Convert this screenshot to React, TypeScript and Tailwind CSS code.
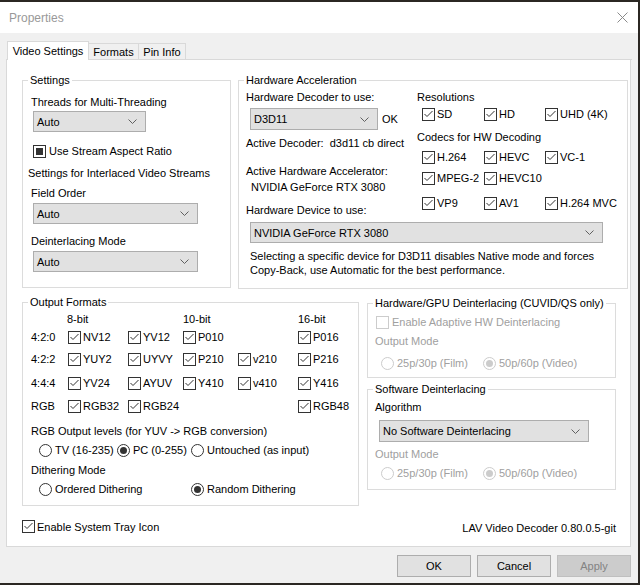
import clsx from "clsx";

type BoxState = "checked" | "mixed" | "off";

const Box = ({ state = "checked", disabled = false }: { state?: BoxState; disabled?: boolean }) => (
  <span
    className={clsx(
      "flex h-[13px] w-[13px] shrink-0 items-center justify-center border bg-white",
      disabled ? "border-[#cccccc]" : "border-[#333333]"
    )}
  >
    {state === "checked" && (
      <svg width="11" height="11" viewBox="0 0 11 11">
        <path d="M1.5 5 L4 7.5 L9.5 2" fill="none" stroke="#333333" strokeWidth="1" />
      </svg>
    )}
    {state === "mixed" && <span className="h-[7px] w-[7px] bg-[#333333]" />}
  </span>
);

const Radio = ({ on = false, disabled = false }: { on?: boolean; disabled?: boolean }) => (
  <span
    className={clsx(
      "flex h-[13px] w-[13px] shrink-0 items-center justify-center rounded-full border bg-white",
      disabled ? "border-[#cccccc]" : "border-[#333333]"
    )}
  >
    {on && <span className={clsx("h-[7px] w-[7px] rounded-full", disabled ? "bg-[#cccccc]" : "bg-[#333333]")} />}
  </span>
);

const Check = ({
  label,
  state = "checked",
  disabled = false,
  className,
}: {
  label: string;
  state?: BoxState;
  disabled?: boolean;
  className?: string;
}) => (
  <div className={clsx("flex h-[14px] items-center gap-[2px]", disabled && "text-[#a0a0a0]", className)}>
    <Box state={state} disabled={disabled} />
    <span className="whitespace-nowrap">{label}</span>
  </div>
);

const Option = ({
  label,
  on = false,
  disabled = false,
  className,
}: {
  label: string;
  on?: boolean;
  disabled?: boolean;
  className?: string;
}) => (
  <div className={clsx("flex h-[14px] items-center gap-[3px]", disabled && "text-[#a0a0a0]", className)}>
    <Radio on={on} disabled={disabled} />
    <span className="whitespace-nowrap">{label}</span>
  </div>
);

const Chevron = () => (
  <svg width="9" height="5" viewBox="0 0 9 5">
    <path d="M0.5 0.5 L4.5 4.5 L8.5 0.5" fill="none" stroke="#606060" strokeWidth="1" />
  </svg>
);

const Combo = ({ value, className }: { value: string; className: string }) => (
  <div
    className={clsx(
      "flex h-[21px] shrink-0 items-center justify-between border border-[#adadad] bg-[#e1e1e1] pl-[3px] pr-[8px]",
      className
    )}
  >
    <span className="whitespace-nowrap">{value}</span>
    <Chevron />
  </div>
);

const Legend = ({ children }: { children: string }) => (
  <legend className="ml-[5px] px-[2px] leading-[15px] whitespace-nowrap">{children}</legend>
);

const SettingsGroup = () => (
  <fieldset className="h-[215px] w-[209px] shrink-0 border border-[#dcdcdc]">
    <Legend>Settings</Legend>
    <div className="flex flex-col pl-[8px]">
      <div className="mt-[7px]">Threads for Multi-Threading</div>
      <Combo value="Auto" className="mt-[2px] ml-[2px] w-[113px]" />
      <Check label="Use Stream Aspect Ratio" state="mixed" className="mt-[12px] ml-[2px] gap-[3px]" />
      <div className="mt-[8px] -ml-[3px]">Settings for Interlaced Video Streams</div>
      <div className="mt-[6px]">Field Order</div>
      <Combo value="Auto" className="mt-[3px] ml-[2px] w-[165px]" />
      <div className="mt-[10px]">Deinterlacing Mode</div>
      <Combo value="Auto" className="mt-[3px] ml-[2px] w-[165px]" />
    </div>
  </fieldset>
);

const HardwareGroup = () => (
  <fieldset className="h-[216px] w-[390px] shrink-0 border border-[#dcdcdc]">
    <Legend>Hardware Acceleration</Legend>
    <div className="flex">
      <div className="flex w-[178px] shrink-0 flex-col pl-[7px]">
        <div className="mt-[2px]">Hardware Decoder to use:</div>
        <div className="mt-[4px] ml-[4px] flex items-center gap-[4px]">
          <Combo value="D3D11" className="h-[22px] w-[128px]" />
          <span>OK</span>
        </div>
        <div className="mt-[6px] whitespace-nowrap">Active Decoder:&nbsp;&nbsp;d3d11 cb direct</div>
        <div className="mt-[14px] whitespace-nowrap">Active Hardware Accelerator:</div>
        <div className="mt-[2px] ml-[5px] whitespace-nowrap">NVIDIA GeForce RTX 3080</div>
        <div className="mt-[9px] whitespace-nowrap">Hardware Device to use:</div>
      </div>
      <div className="flex flex-col">
        <div className="mt-[2px]">Resolutions</div>
        <div className="mt-[3px] flex pl-[5px]">
          <Check label="SD" className="w-[62px]" />
          <Check label="HD" className="w-[61px]" />
          <Check label="UHD (4K)" />
        </div>
        <div className="mt-[9px]">Codecs for HW Decoding</div>
        <div className="mt-[6px] flex pl-[5px]">
          <Check label="H.264" className="w-[62px]" />
          <Check label="HEVC" className="w-[61px]" />
          <Check label="VC-1" />
        </div>
        <div className="mt-[7px] flex pl-[5px]">
          <Check label="MPEG-2" className="w-[62px]" />
          <Check label="HEVC10" className="w-[61px]" />
        </div>
        <div className="mt-[11px] flex pl-[5px]">
          <Check label="VP9" className="w-[62px]" />
          <Check label="AV1" className="w-[61px]" />
          <Check label="H.264 MVC" />
        </div>
      </div>
    </div>
    <div className="flex flex-col pl-[11px]">
      <Combo value="NVIDIA GeForce RTX 3080" className="mt-[5px] w-[353px]" />
      <p className="mt-[6px] whitespace-nowrap">
        Selecting a specific device for D3D11 disables Native mode and forces
        <br />
        Copy-Back, use Automatic for the best performance.
      </p>
    </div>
  </fieldset>
);

const formatRows: { label: string; cells: (string | null)[] }[] = [
  { label: "4:2:0", cells: ["NV12", "YV12", "P010", null, "P016"] },
  { label: "4:2:2", cells: ["YUY2", "UYVY", "P210", "v210", "P216"] },
  { label: "4:4:4", cells: ["YV24", "AYUV", "Y410", "v410", "Y416"] },
  { label: "RGB", cells: ["RGB32", "RGB24", null, null, "RGB48"] },
];

const OutputGroup = () => (
  <fieldset className="h-[211px] w-[337px] shrink-0 border border-[#dcdcdc]">
    <Legend>Output Formats</Legend>
    <div className="flex flex-col pl-[8px]">
      <div className="mt-[2px] grid grid-cols-[37px_60px_55px_55px_60px_1fr] grid-rows-[14px_22px_22px_26px_20px] items-center">
        <span />
        <span className="-ml-[1px]">8-bit</span>
        <span />
        <span>10-bit</span>
        <span />
        <span>16-bit</span>
        {formatRows.map((row) => (
          <div key={row.label} className="contents">
            <span>{row.label}</span>
            {row.cells.map((c, i) => (c ? <Check key={i} label={c} /> : <span key={i} />))}
          </div>
        ))}
      </div>
      <div className="mt-[8px] whitespace-nowrap">RGB Output levels (for YUV -&gt; RGB conversion)</div>
      <div className="mt-[5px] flex pl-[8px]">
        <Option label="TV (16-235)" className="w-[78px]" />
        <Option label="PC (0-255)" on className="w-[74px]" />
        <Option label="Untouched (as input)" />
      </div>
      <div className="mt-[6px]">Dithering Mode</div>
      <div className="mt-[5px] flex pl-[8px]">
        <Option label="Ordered Dithering" className="w-[152px]" />
        <Option label="Random Dithering" on />
      </div>
    </div>
  </fieldset>
);

const DeinterlaceGroups = () => (
  <div className="ml-[8px] flex w-[249px] shrink-0 flex-col">
    <fieldset className="mt-[1px] h-[82px] border border-[#dcdcdc]">
      <Legend>Hardware/GPU Deinterlacing (CUVID/QS only)</Legend>
      <div className="flex flex-col pl-[7px]">
        <Check label="Enable Adaptive HW Deinterlacing" state="off" disabled className="mt-[4px] ml-[1px] gap-[3px]" />
        <div className="mt-[5px] text-[#a0a0a0]">Output Mode</div>
        <div className="mt-[8px] flex pl-[6px]">
          <Option label="25p/30p (Film)" disabled className="w-[102px]" />
          <Option label="50p/60p (Video)" on disabled />
        </div>
      </div>
    </fieldset>
    <fieldset className="mt-[4px] h-[108px] border border-[#dcdcdc]">
      <Legend>Software Deinterlacing</Legend>
      <div className="flex flex-col pl-[7px]">
        <div className="mt-[3px]">Algorithm</div>
        <Combo value="No Software Deinterlacing" className="mt-[6px] ml-[4px] h-[22px] w-[210px]" />
        <div className="mt-[5px] text-[#a0a0a0]">Output Mode</div>
        <div className="mt-[5px] flex pl-[6px]">
          <Option label="25p/30p (Film)" disabled className="w-[102px]" />
          <Option label="50p/60p (Video)" on disabled />
        </div>
      </div>
    </fieldset>
  </div>
);

export default function App() {
  return (
    <div className="h-[585px] w-[640px] overflow-hidden bg-[#2b2723] pt-[2px] font-['Liberation_Sans',Arial,sans-serif] text-[11px] leading-[14px] text-black">
      <div className="flex h-[581px] w-[638px] flex-col bg-[#f0f0f0]">
        <div className="flex h-[31px] shrink-0 items-center justify-between bg-white pl-[9px] pr-[10px]">
          <span className="text-[12px] text-[#999999]">Properties</span>
          <svg width="11" height="11" viewBox="0 0 11 11">
            <path d="M0.5 0.5 L10.5 10.5 M10.5 0.5 L0.5 10.5" stroke="#8a8a8a" strokeWidth="1" />
          </svg>
        </div>

        <div className="flex flex-col px-[6px] pt-[8px]">
          <div className="flex h-[19px] items-end">
            <div className="w-[1px] self-stretch border-b border-[#d9d9d9]" />
            <div className="flex h-[19px] w-[82px] items-center justify-center border-x border-t border-[#d9d9d9] bg-white">
              Video Settings
            </div>
            <div className="flex h-[17px] w-[50px] items-center justify-center border-y border-r border-[#d9d9d9]">
              Formats
            </div>
            <div className="flex h-[17px] w-[47px] items-center justify-center border-y border-r border-[#d9d9d9]">
              Pin Info
            </div>
            <div className="flex-1 self-stretch border-b border-[#d9d9d9]" />
          </div>

          <div className="flex h-[487px] w-[625px] flex-col border-x border-b border-[#d9d9d9] bg-white pt-[13px] pl-[15px]">
            <div className="flex gap-[7px]">
              <SettingsGroup />
              <HardwareGroup />
            </div>
            <div className="mt-[6px] flex items-start">
              <OutputGroup />
              <DeinterlaceGroups />
            </div>
            <div className="mt-[12px] flex items-center justify-between pr-[14px]">
              <Check label="Enable System Tray Icon" />
              <span className="mt-[3px]">LAV Video Decoder 0.80.0.5-git</span>
            </div>
          </div>

          <div className="mt-[8px] flex justify-end gap-[6px] pr-[1px]">
            <button className="h-[22px] w-[74px] border border-[#adadad] bg-[#e1e1e1]">OK</button>
            <button className="h-[22px] w-[74px] border border-[#adadad] bg-[#e1e1e1]">Cancel</button>
            <button className="h-[22px] w-[74px] border border-[#bfbfbf] bg-[#cccccc] text-[#838383]">Apply</button>
          </div>
        </div>
      </div>
    </div>
  );
}
